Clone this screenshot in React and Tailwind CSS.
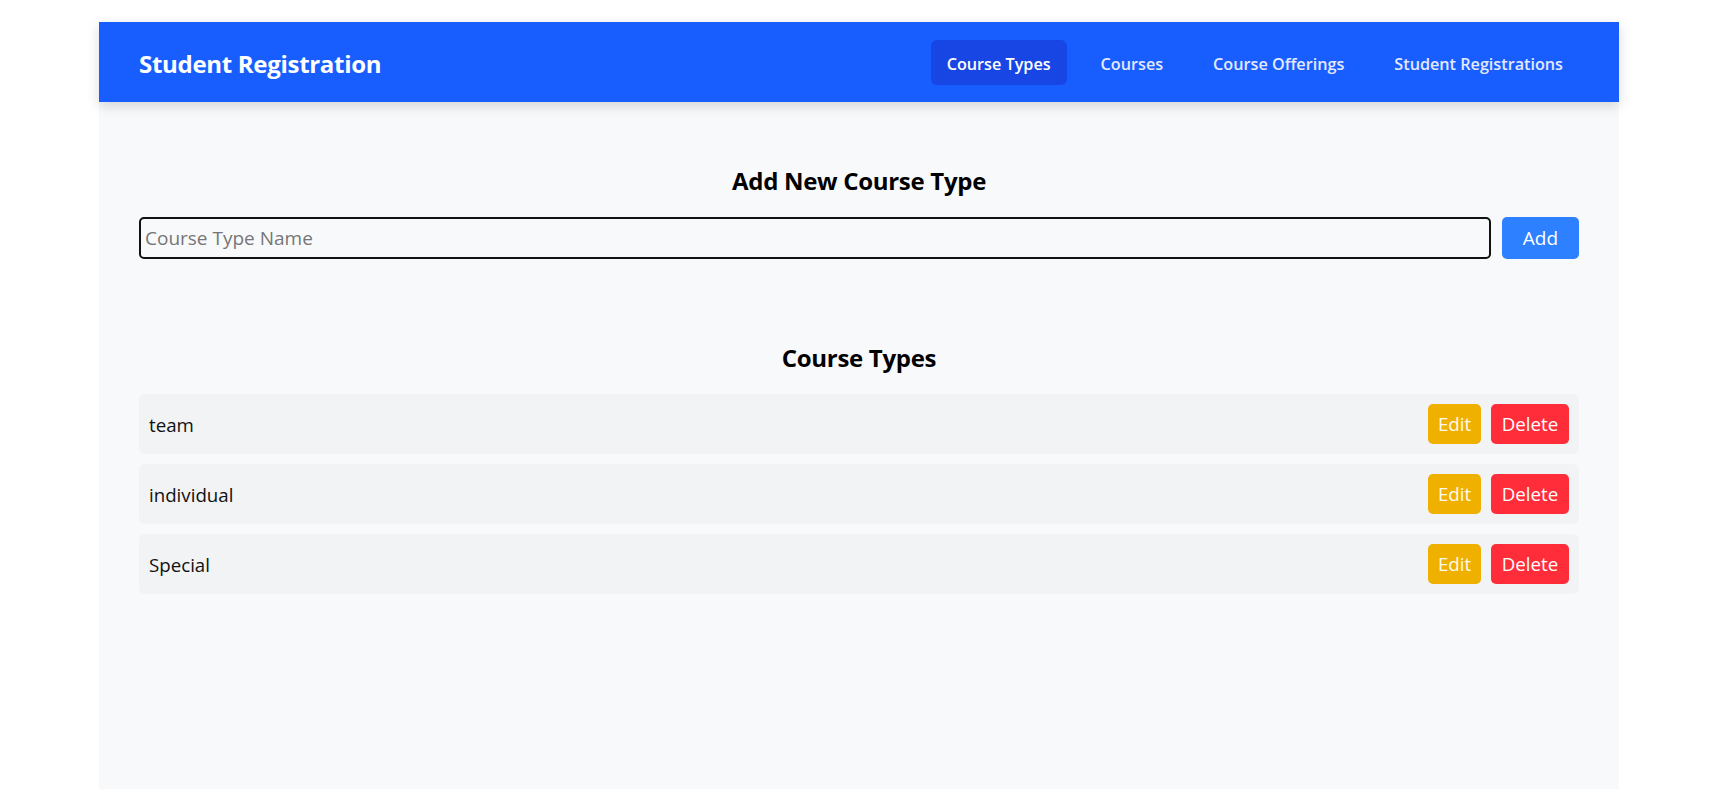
import React from "react";

const navItems = ["Course Types", "Courses", "Course Offerings", "Student Registrations"];
const types = ["team", "individual", "Special"];

export default function App() {
  return (
    <div
      className="min-h-screen bg-white pt-[22px]"
      style={{ fontFamily: '"Open Sans", "Noto Sans", sans-serif' }}
    >
      <div className="ml-[99px] w-[1520px] min-h-[767px] bg-[#f8f9fb]">
        <header className="h-[80px] px-10 flex items-center justify-between bg-[#185eff] shadow-[0_4px_12px_rgba(0,0,0,0.15)]">
          <h1 className="pt-[4px] text-[24px] font-bold text-white tracking-[-0.3px]">Student Registration</h1>
          <nav className="flex items-center gap-[18px]">
            {navItems.map((item, i) => (
              <a
                key={item}
                className={
                  i === 0
                    ? "h-[45px] px-4 pt-[4px] flex items-center rounded-[6px] bg-[#1746e4] text-white text-[16.2px] font-semibold"
                    : "h-[45px] px-4 pt-[4px] flex items-center rounded-[6px] text-[#e3e9ff] text-[16.2px] font-semibold"
                }
              >
                {item}
              </a>
            ))}
          </nav>
        </header>

        <main className="px-10 pt-[63px] pb-10">
          <section>
            <h2 className="text-center text-[24px] leading-8 font-bold text-black tracking-[-0.3px]">
              Add New Course Type
            </h2>
            <div className="mt-5 flex items-start gap-[11px]">
              <input
                type="text"
                placeholder="Course Type Name"
                className="flex-1 h-[42px] rounded-[5px] border-2 border-[#111] bg-transparent px-1 text-[19px] text-black placeholder:text-[#767676] outline-none"
              />
              <button className="w-[77px] h-[42px] rounded-[5px] bg-[#2d80ff] text-white text-[19px]">
                Add
              </button>
            </div>
          </section>

          <section className="mt-[83px]">
            <h2 className="text-center text-[24px] leading-8 font-bold text-black tracking-[-0.3px]">
              Course Types
            </h2>
            <ul className="mt-[20px] flex flex-col gap-[10px]">
              {types.map((t) => (
                <li
                  key={t}
                  className="h-[60px] p-[10px] flex items-center justify-between rounded-[6px] bg-[#f2f3f5]"
                >
                  <span className="pt-[2px] text-[18.7px] text-[#111]">{t}</span>
                  <div className="flex items-center gap-[10px]">
                    <button className="w-[53px] h-[40px] pt-[1px] rounded-[5px] bg-[#f0b000] text-[#fffbea] text-[18.7px]">
                      Edit
                    </button>
                    <button className="w-[78px] h-[40px] pt-[1px] rounded-[5px] bg-[#ff2d3a] text-white text-[18.7px]">
                      Delete
                    </button>
                  </div>
                </li>
              ))}
            </ul>
          </section>
        </main>
      </div>
    </div>
  );
}
